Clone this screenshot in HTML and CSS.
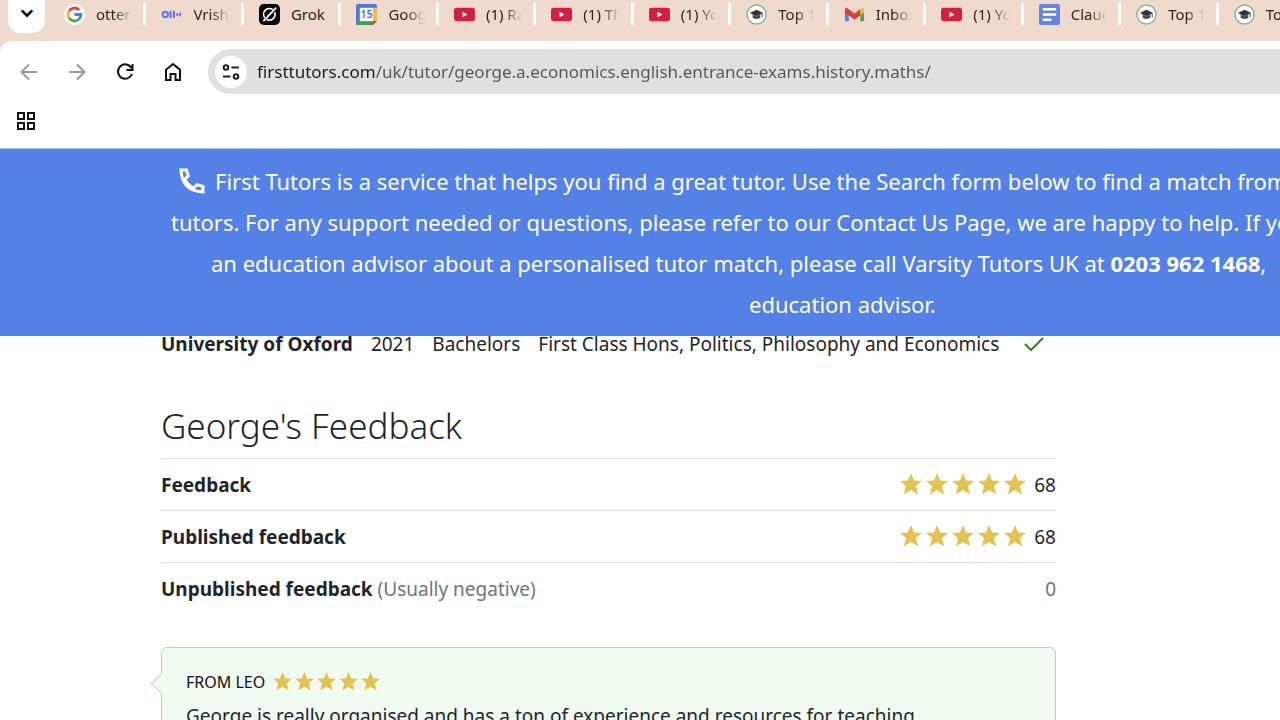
FILE: index.html
```
<!DOCTYPE html>
<html lang="en">
<head>
  <meta charset="UTF-8">
  <meta name="viewport" content="width=device-width, initial-scale=1.0">
  <title>George - First Tutors</title>
  <link rel="stylesheet" href="styles.css">
</head>
<body>

  <!-- shared icons -->
  <svg class="sprite" aria-hidden="true">
    <symbol id="star" viewBox="0 0 24 24"><path d="M12 0l3.400 8.200 8.600.4-6.600 5.600 2.400 9.200L12 18.600l-7.800 4.800 2.400-9.200L0 8.600l8.600-.4z"/></symbol>
    <symbol id="youtube" viewBox="0 0 22 22"><rect x="0" y="4" width="22" height="14" rx="3" fill="#d0203c"/><path d="M9 8l5 3-5 3z" fill="#fff"/></symbol>
    <symbol id="tutor" viewBox="0 0 22 22"><circle cx="11" cy="11" r="10" fill="#fff" stroke="#8db592" stroke-width="1.6"/><path d="M11 6L4 9.500l7 3.300 7-3.300z" fill="#333"/><path d="M7 11v3.200c2 2 6 2 8 0V11l-4 2z" fill="#444"/><path d="M17 10v4" stroke="#444"/></symbol>
    <symbol id="google" viewBox="0 0 22 22"><circle cx="11" cy="11" r="11" fill="#fff"/><g fill="none" stroke-width="3"><path d="M5.300 7.400A6.700 6.700 0 0 1 15.800 6.300" stroke="#e0443a"/><path d="M5.300 14.600a6.700 6.700 0 0 1 0-7.200" stroke="#f2bb2e"/><path d="M15.500 16a6.700 6.700 0 0 1-10.200-1.400" stroke="#4aa65a"/><path d="M11 11h6.700a6.700 6.700 0 0 1-2.200 5" stroke="#4a80e8"/></g></symbol>
    <symbol id="otter" viewBox="0 0 22 22"><g fill="none" stroke="#5b7de6" stroke-width="2.2" stroke-linecap="round"><circle cx="4.500" cy="11" r="2.800"/><path d="M10 8v6M13.500 8v6M17 10.600v.8M20 10v2"/></g></symbol>
    <symbol id="grok" viewBox="0 0 22 22"><rect width="22" height="22" rx="5" fill="#050505"/><path d="M14.500 6A6 6 0 0 0 6 14.300M16.300 8.500A6 6 0 0 1 8 16.200M4.500 18L18 4 9 13" fill="none" stroke="#fff" stroke-width="1.7"/></symbol>
    <symbol id="calendar" viewBox="0 0 22 22"><path d="M0 2q0-2 2-2h18q2 0 2 2v15l-5 5H2q-2 0-2-2z" fill="#4c78d8"/><path d="M18 4h4v14h-4z" fill="#efbd43"/><path d="M4 18h14v4H2q-2 0-2-2v-2z" fill="#4a9654"/><path d="M18 18h4l-4 4z" fill="#d34a36"/><path d="M4 4h14v14H4z" fill="#fff"/><text x="11" y="15" text-anchor="middle" class="cal-day">15</text></symbol>
    <symbol id="gmail" viewBox="0 0 22 22"><path d="M1 5l4 3v10H2q-1 0-1-1z" fill="#4d80df"/><path d="M21 5l-4 3v10h3q1 0 1-1z" fill="#4ca35b"/><path d="M17 5.500l2-1.400q2-1 2 1.400V9l-4 3z" fill="#edbb3d"/><path d="M1 5.500Q1 3 3.300 4.300L11 10l6-4.500V12l-6 4.500L1 9z" fill="#d54436"/></symbol>
    <symbol id="docs" viewBox="0 0 22 22"><rect width="22" height="22" rx="2" fill="#6484df"/><path d="M4 5.500h14M4 11h14M4 16.500h9" stroke="#fff" stroke-width="2.4"/></symbol>
  </svg>

  <header class="browser">
    <nav class="tabs">
      <button class="tab-search" aria-label="Search tabs"><svg viewBox="0 0 12 12"><path d="M2 4l4 4 4-4"/></svg></button>
      <div class="tab-list">
        <a class="tab" href="#"><svg><use href="#google"/></svg><span>otter</span></a>
        <a class="tab" href="#"><svg><use href="#otter"/></svg><span>Vrish</span></a>
        <a class="tab" href="#"><svg><use href="#grok"/></svg><span class="full">Grok</span></a>
        <a class="tab" href="#"><svg><use href="#calendar"/></svg><span>Goog</span></a>
        <a class="tab" href="#"><svg><use href="#youtube"/></svg><span>(1) Ra</span></a>
        <a class="tab" href="#"><svg><use href="#youtube"/></svg><span>(1) Th</span></a>
        <a class="tab" href="#"><svg><use href="#youtube"/></svg><span>(1) Yo</span></a>
        <a class="tab" href="#"><svg><use href="#tutor"/></svg><span>Top 1</span></a>
        <a class="tab" href="#"><svg><use href="#gmail"/></svg><span>Inbox</span></a>
        <a class="tab" href="#"><svg><use href="#youtube"/></svg><span>(1) Yo</span></a>
        <a class="tab" href="#"><svg><use href="#docs"/></svg><span>Claud</span></a>
        <a class="tab" href="#"><svg><use href="#tutor"/></svg><span>Top 1</span></a>
        <a class="tab" href="#"><svg><use href="#tutor"/></svg><span>Top 1</span></a>
      </div>
    </nav>

    <div class="toolbar">
      <button class="tool muted" aria-label="Back"><svg viewBox="0 0 20 20"><path d="M18 10H3M10 2.500L2.500 10l7.500 7.500"/></svg></button>
      <button class="tool muted" aria-label="Forward"><svg viewBox="0 0 20 20"><path d="M2 10h15M10 2.500l7.500 7.500-7.500 7.500"/></svg></button>
      <button class="tool" aria-label="Reload"><svg viewBox="0 0 20 20"><path d="M16.500 6A7.200 7.200 0 1 0 17 12M17.500 2v6h-6"/></svg></button>
      <button class="tool" aria-label="Home"><svg viewBox="0 0 20 20"><path d="M3 7.700L10 2l7 5.700V18h-4.500v-6h-5v6H3z"/></svg></button>
      <div class="omnibox">
        <button class="site-info" aria-label="Site information"><svg viewBox="0 0 20 20"><circle cx="5" cy="5.500" r="2.300"/><path d="M10.500 5.500H18M2 14.500h7.500"/><circle cx="15" cy="14.500" r="2.300"/></svg></button>
        <input class="url" type="text" aria-label="Address" value="firsttutors.com/uk/tutor/george.a.economics.english.entrance-exams.history.maths/">
      </div>
    </div>

    <div class="bookmarks">
      <button class="tool" aria-label="Tab groups"><svg viewBox="0 0 20 20"><path d="M2 2h6v6H2zM12 2h6v6h-6zM2 12h6v6H2zM12 12h6v6h-6z"/></svg></button>
    </div>
  </header>

  <div class="banner">
    <p class="line-intro"><svg class="phone" viewBox="0 0 26 26"><path d="M2 2h5.500l1.800 6-3.600 3.200q3 6 9 9l3.300-3.600 6 1.800V24Q3 23 2 2z"/></svg>First Tutors is a service that helps you find a great tutor. Use the Search form below to find a match from</p>
    <p class="line-support">tutors. For any support needed or questions, please refer to our Contact Us Page, we are happy to help. If you</p>
    <p class="line-call">an education advisor about a personalised tutor match, please call Varsity Tutors UK at <strong>0203 962 1468</strong>,</p>
    <p class="line-end">education advisor.</p>
  </div>

  <main class="profile">
    <table class="qualifications">
      <tr>
        <th scope="row">University of Oxford</th>
        <td>2021</td>
        <td>Bachelors</td>
        <td>First Class Hons, Politics, Philosophy and Economics</td>
        <td class="verified"><svg viewBox="0 0 22 16" role="img" aria-label="Verified"><path d="M2 8l6 6L20 2"/></svg></td>
      </tr>
    </table>

    <h2>George's Feedback</h2>
    <table class="feedback">
      <tr>
        <th scope="row">Feedback</th>
        <td><span class="stars"><svg><use href="#star"/></svg><svg><use href="#star"/></svg><svg><use href="#star"/></svg><svg><use href="#star"/></svg><svg><use href="#star"/></svg></span>68</td>
      </tr>
      <tr>
        <th scope="row">Published feedback</th>
        <td><span class="stars"><svg><use href="#star"/></svg><svg><use href="#star"/></svg><svg><use href="#star"/></svg><svg><use href="#star"/></svg><svg><use href="#star"/></svg></span>68</td>
      </tr>
      <tr>
        <th scope="row">Unpublished feedback <span class="note">(Usually negative)</span></th>
        <td class="note">0</td>
      </tr>
    </table>

    <article class="review">
      <div class="review-from">FROM LEO <span class="stars small"><svg><use href="#star"/></svg><svg><use href="#star"/></svg><svg><use href="#star"/></svg><svg><use href="#star"/></svg><svg><use href="#star"/></svg></span></div>
      <p>George is really organised and has a ton of experience and resources for teaching</p>
    </article>
  </main>

</body>
</html>
```
FILE: styles.css
```
* {
  box-sizing: border-box;
}

body {
  margin: 0;
  height: 100vh;
  overflow: hidden;
  background: #fff;
  color: #212529;
  font-family: 'Segoe UI', 'Noto Sans', 'Open Sans', sans-serif;
  font-size: 19px;
}

button {
  border: 0;
  padding: 0;
  background: none;
  cursor: pointer;
}

.sprite {
  position: absolute;
  width: 0;
  height: 0;
}

.cal-day {
  font-size: 11px;
  font-weight: 600;
  fill: #3f6fd0;
}

/* browser chrome */
.browser {
  background: #f0dacd;
  border-bottom: 1px solid #b5cdf3;
}

.tabs {
  display: flex;
  height: 41px;
  overflow: hidden;
}

.tab-search {
  flex: none;
  width: 37px;
  height: 33px;
  margin: 0 4px 0 8px;
  background: #fff;
  border-radius: 0 0 12px 12px;
}

.tab-search svg {
  width: 16px;
  height: 16px;
  margin-top: -4px;
  fill: none;
  stroke: #111;
  stroke-width: 2;
}

.tab-list {
  flex: 1;
  min-width: 0;
  display: flex;
  margin-right: -36px;
}

.tab {
  flex: 1 1 0;
  min-width: 0;
  height: 22px;
  margin-top: 3px;
  padding: 0 8px 0 15px;
  display: flex;
  align-items: center;
  gap: 11px;
  border-right: 3px solid #fff;
  color: #2b2320;
  font-size: 15px;
  text-decoration: none;
}

.tab svg {
  flex: none;
  width: 21px;
  height: 21px;
}

.tab span {
  flex: 1;
  overflow: hidden;
  white-space: nowrap;
  -webkit-mask-image: linear-gradient(to right, #000 45%, transparent 92%);
  mask-image: linear-gradient(to right, #000 45%, transparent 92%);
}

.tab .full {
  -webkit-mask-image: none;
  mask-image: none;
}

.toolbar {
  display: flex;
  align-items: center;
  padding: 8px 0 8px 19px;
  background: #fff;
  border-radius: 12px 0 0 0;
}

.tool {
  width: 20px;
  height: 20px;
  margin-right: 28px;
}

.tool svg {
  display: block;
  width: 20px;
  height: 20px;
  fill: none;
  stroke: #111;
  stroke-width: 2;
}

.tool.muted svg {
  stroke: #999;
}

.omnibox {
  flex: 1;
  display: flex;
  align-items: center;
  height: 45px;
  margin-left: -3px;
  padding-left: 7px;
  background: #e0e0e0;
  border-radius: 23px 0 0 23px;
}

.site-info {
  width: 32px;
  height: 32px;
  border-radius: 50%;
  background: #fff;
}

.site-info svg {
  display: block;
  width: 20px;
  height: 20px;
  margin: 0 auto;
  fill: none;
  stroke: #222;
  stroke-width: 2;
}

/* domain is darker than the path */
.url {
  flex: 1;
  margin-left: 10px;
  padding: 0;
  border: 0;
  outline: 0;
  font: inherit;
  font-size: 17px;
  background: linear-gradient(to right, #1c1c1c 118px, #555 118px);
  -webkit-background-clip: text;
  background-clip: text;
  color: transparent;
}

.bookmarks {
  height: 46px;
  padding: 9px 16px;
  background: #fff;
}

/* notice */
.banner {
  position: relative;
  z-index: 1;
  padding: 12px 0 11px;
  background: #5381e6;
  color: #fff;
  font-size: 22px;
  line-height: 41px;
  white-space: nowrap;
  overflow: hidden;
}

.banner p {
  margin: 0;
}

.banner .line-intro {
  display: flex;
  gap: 10px;
  padding-left: 179px;
}

.line-support {
  padding-left: 171px;
}

.line-call {
  padding-left: 211px;
}

.line-end {
  padding-left: 749px;
}

.phone {
  flex: none;
  width: 26px;
  height: 26px;
  margin-top: 7px;
  fill: none;
  stroke: #fff;
  stroke-width: 3;
}

/* profile */
.profile {
  width: 70%;
  max-width: 895px;
  margin-left: 161px;
}

table {
  border-collapse: collapse;
}

.qualifications {
  margin-top: -7px;
  line-height: 30px;
  white-space: nowrap;
}

.qualifications th,
.qualifications td {
  padding: 0 18px 0 0;
}

.qualifications .verified {
  padding: 0 0 0 6px;
}

.verified svg {
  display: block;
  width: 22px;
  height: 16px;
  fill: none;
  stroke: #3b7a27;
  stroke-width: 2;
}

h2 {
  margin: 43px 0 8px;
  font-size: 35px;
  font-weight: 300;
  line-height: 48px;
}

.feedback {
  width: 100%;
}

.feedback tr {
  height: 52px;
  border-top: 1px solid #d8dcdf;
}

.feedback th {
  padding: 0;
  text-align: left;
}

.feedback td {
  padding: 0;
  text-align: right;
}

.feedback .note {
  color: #6c757d;
  font-weight: 400;
}

.stars {
  display: inline-flex;
  gap: 4px;
  margin-right: 8px;
  vertical-align: -3px;
}

.stars svg {
  width: 22px;
  height: 22px;
  fill: #e2c251;
}

.stars.small {
  gap: 3px;
}

.stars.small svg {
  width: 19px;
  height: 19px;
}

.review {
  position: relative;
  margin-top: 32px;
  padding: 17px 24px;
  background: #f1faf1;
  border: 1px solid #b0d8b5;
  border-radius: 6px;
  line-height: 34px;
}

/* speech bubble pointer */
.review::before {
  content: '';
  position: absolute;
  left: -8px;
  top: 28px;
  width: 14px;
  height: 14px;
  background: #f1faf1;
  border: 1px solid #b0d8b5;
  border-width: 0 0 1px 1px;
  transform: rotate(45deg);
}

.review-from {
  display: flex;
  align-items: center;
  gap: 8px;
  color: #111;
  font-size: 16px;
}

.review p {
  margin: 0;
  white-space: nowrap;
}
```
